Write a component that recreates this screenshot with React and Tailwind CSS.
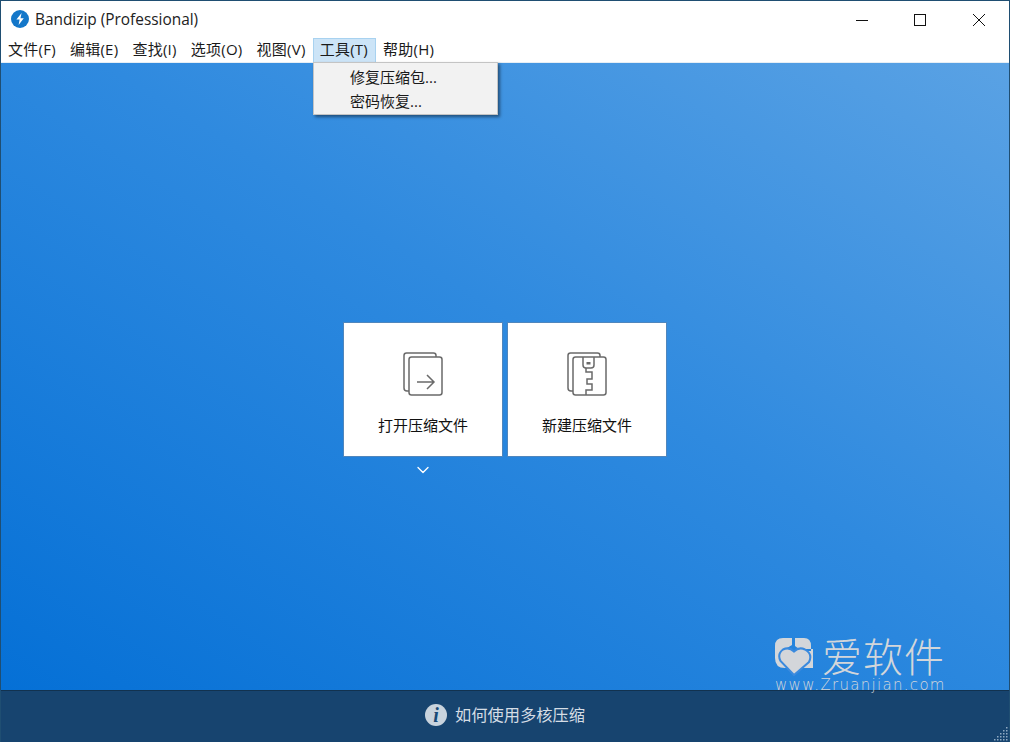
import React from "react";
import { ChevronDown } from "lucide-react";

const FONT = "font-['Open_Sans','Noto_Sans_CJK_SC',sans-serif]";

const menuItems = [
  { name: "文件(F)" },
  { name: "编辑(E)" },
  { name: "查找(I)" },
  { name: "选项(O)" },
  { name: "视图(V)" },
  { name: "工具(T)", active: true },
  { name: "帮助(H)" },
];

const AppIcon = () => (
  <svg width="18" height="18" viewBox="0 0 18 18">
    <circle cx="9" cy="9" r="9" fill="#1477c9" />
    <path d="M10.6 3 L5.4 9.6 L8.6 9.6 L7.6 15 L12.8 8.2 L9.5 8.2 Z" fill="#fff" />
  </svg>
);

const Sheets = ({ children }) => (
  <svg width="40" height="44" viewBox="0 0 40 44" fill="none" stroke="#6a6a6a" strokeWidth="1.5">
    <path d="M33 5 V3.5 Q33 1 30.5 1 H3.5 Q1 1 1 3.5 V36 Q1 39 4 39 H6" />
    <rect x="6" y="5" width="33" height="38" rx="2.5" />
    {children}
  </svg>
);

const OpenIcon = () => (
  <Sheets>
    <path d="M14 30 H30 M24 23 L31 30 L24 37" />
  </Sheets>
);

const NewIcon = () => (
  <Sheets>
    <path d="M16 5 V13 Q16 16 19 16 H24 Q27 16 27 13 V5" />
    <path d="M19 16 V20 H25 V27 H20 V32 H25 V38 H19 V43" />
    <rect x="19.5" y="10" width="4" height="2.5" fill="#6a6a6a" stroke="none" />
  </Sheets>
);

const BigButton = ({ icon, label }) => (
  <div className="w-40 h-[135px] bg-white border border-[#4f86bd] flex flex-col items-center pt-[29px]">
    {icon}
    <span className="mt-[19px] text-[15px] leading-5 text-[#111]">{label}</span>
  </div>
);

const WatermarkLogo = () => (
  <svg width="38" height="38" viewBox="0 0 38 38">
    <path
      d="M0 8 Q0 0 8 0 H17 V7 L12 10 L15 13 H36 V8 Q36 0 29 0 H20 V8 L24 11 H38 V30 H10 Q0 30 0 20 Z"
      fill="#d3d6da"
    />
    <path
      d="M19 37 L5.5 23 Q2 16 8 11.5 Q14 8.5 19 13.5 Q24 8.5 30 11.5 Q38 16 34 24 Z"
      fill="#d3d6da"
      stroke="#3a8ade"
      strokeWidth="2"
    />
  </svg>
);

const GripDots = () => (
  <svg width="14" height="14" viewBox="0 0 14 14" fill="#8fa9c2">
    {[
      [12, 0],
      [12, 3], [9, 3],
      [12, 6], [9, 6], [6, 6],
      [12, 9], [9, 9], [6, 9], [3, 9],
      [12, 12], [9, 12], [6, 12], [3, 12], [0, 12],
    ].map(([x, y]) => (
      <rect key={`${x}-${y}`} x={x} y={y} width="1.5" height="1.5" />
    ))}
  </svg>
);

export default function App() {
  return (
    <div className={`w-[1010px] h-[742px] flex flex-col overflow-hidden bg-white border-t border-x border-[#1f4e72] ${FONT}`}>
      {/* title bar */}
      <div className="h-[37px] flex items-center justify-between shrink-0">
        <div className="flex items-center gap-[6px] pl-[10px]">
          <AppIcon />
          <span className="text-[15.4px] text-[#222]">Bandizip (Professional)</span>
        </div>
        <div className="flex items-center">
          <div className="w-[60px] flex justify-center">
            <svg width="12" height="12" viewBox="0 0 12 12" stroke="#111">
              <path d="M0 6.5 H12" />
            </svg>
          </div>
          <div className="w-[56px] flex justify-center">
            <svg width="12" height="12" viewBox="0 0 12 12" fill="none" stroke="#111">
              <rect x="0.5" y="0.5" width="11" height="11" />
            </svg>
          </div>
          <div className="w-[61px] flex justify-center">
            <svg width="12" height="12" viewBox="0 0 12 12" stroke="#111">
              <path d="M0 0 L12 12 M12 0 L0 12" />
            </svg>
          </div>
        </div>
      </div>

      {/* menu bar */}
      <div className="relative h-[25px] flex items-stretch shrink-0 border-b border-[#e6eef5] text-[15px] text-[#1a1a1a]">
        <div className="flex tracking-[0.26px]">
          {menuItems.map((item) => (
            <div
              key={item.name}
              className={
                item.active
                  ? "h-[25px] pl-[6px] pr-[7px] pb-[2px] flex items-center bg-[#cce4f7] border border-[#a8d2f0]"
                  : "h-[25px] px-[7px] pb-[2px] flex items-center"
              }
            >
              {item.name}
            </div>
          ))}
        </div>
        <div className="absolute left-[312px] top-[24px] z-10 w-[185px] h-[53px] bg-[#f2f2f2] border border-[#c4c4c4] shadow-[2px_2px_3px_rgba(0,0,0,0.45)] pt-[2px]">
          <div className="h-6 pl-9 flex items-center">修复压缩包...</div>
          <div className="h-6 pl-9 flex items-center">密码恢复...</div>
        </div>
      </div>

      {/* main area */}
      <div className="relative flex-1 flex flex-col items-center bg-[linear-gradient(to_top_right,#0570d6_0%,#2f8adf_55%,#5aa2e4_100%)]">
        <div className="flex gap-1 mt-[259px]">
          <BigButton icon={<OpenIcon />} label="打开压缩文件" />
          <BigButton icon={<NewIcon />} label="新建压缩文件" />
        </div>
        <div className="w-[324px] flex">
          <div className="w-40 flex justify-center mt-[3px] pr-px">
            <ChevronDown size={20} className="text-white" strokeWidth={1.6} />
          </div>
        </div>

        <div className="absolute left-[774px] bottom-[-2px] flex flex-col gap-[2px] z-10">
          <div className="flex items-center gap-[9px]">
            <WatermarkLogo />
            <span className="text-[40px] leading-[38px] font-light tracking-[1px] text-[#d3d6da]">爱软件</span>
          </div>
          <span className="text-[15px] leading-[14px] tracking-[1.3px] text-[#d3d6da] font-['DejaVu_Sans',sans-serif] font-light">www.Zruanjian.com</span>
        </div>
      </div>

      {/* bottom bar */}
      <div className="relative h-[52px] shrink-0 flex items-center justify-center gap-[8px] pb-[3px] bg-[#17446f] border-t border-[#12324f]">
        <div className="w-[22px] h-[22px] rounded-full bg-[#c8d3dd] flex items-center justify-center text-[20px] italic font-bold text-[#184a77] font-['Liberation_Serif',serif]">
          i
        </div>
        <span className="text-[16.25px] text-[#d5dde5]">如何使用多核压缩</span>
        <div className="absolute right-px bottom-px">
          <GripDots />
        </div>
      </div>
    </div>
  );
}
